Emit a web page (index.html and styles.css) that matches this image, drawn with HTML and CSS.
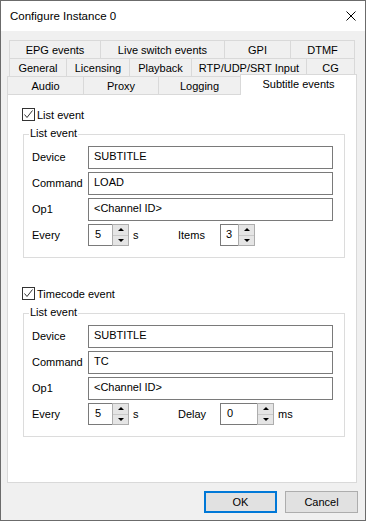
FILE: index.html
```html
<!DOCTYPE html>
<html>
<head>
<meta charset="utf-8">
<link rel="stylesheet" href="styles.css">
</head>
<body>
<div class="window">
  <div class="titlebar">
    <span class="title">Configure Instance 0</span>
    <svg class="close" width="10" height="10" viewBox="0 0 10 10"><path d="M0.5 0.5L9.5 9.5M9.5 0.5L0.5 9.5" stroke="#000" stroke-width="1" fill="none"/></svg>
  </div>
  <div class="tabs">
    <div class="tabrow">
      <div class="tab t-epg">EPG events</div>
      <div class="tab t-live">Live switch events</div>
      <div class="tab t-gpi">GPI</div>
      <div class="tab t-dtmf">DTMF</div>
    </div>
    <div class="tabrow">
      <div class="tab t-gen">General</div>
      <div class="tab t-lic">Licensing</div>
      <div class="tab t-play">Playback</div>
      <div class="tab t-rtp">RTP/UDP/SRT Input</div>
      <div class="tab t-cg">CG</div>
    </div>
    <div class="tabrow front">
      <div class="tab t-audio">Audio</div>
      <div class="tab t-proxy">Proxy</div>
      <div class="tab t-log">Logging</div>
      <div class="tab t-sub selected">Subtitle events</div>
    </div>
  </div>
  <div class="panel">
    <section class="event">
      <div class="check"><span class="box"><svg width="11" height="11" viewBox="0 0 11 11"><path d="M1.5 5.5L4 8.5L9.5 1.5" stroke="#333" stroke-width="1" fill="none"/></svg></span><span class="ctext">List event</span></div>
      <div class="group">
        <span class="legend">List event</span>
        <div class="field"><span class="lbl">Device</span><div class="input">SUBTITLE</div></div>
        <div class="field"><span class="lbl">Command</span><div class="input">LOAD</div></div>
        <div class="field"><span class="lbl">Op1</span><div class="input">&lt;Channel ID&gt;</div></div>
        <div class="spinrow">
          <span class="lbl">Every</span>
          <div class="spin"><span class="val v-every">5</span><span class="btns"><span class="up"></span><span class="down"></span></span></div>
          <span class="unit">s</span>
          <span class="lbl2">Items</span>
          <div class="spin"><span class="val v-items">3</span><span class="btns"><span class="up"></span><span class="down"></span></span></div>
        </div>
      </div>
    </section>
    <section class="event second">
      <div class="check"><span class="box"><svg width="11" height="11" viewBox="0 0 11 11"><path d="M1.5 5.5L4 8.5L9.5 1.5" stroke="#333" stroke-width="1" fill="none"/></svg></span><span class="ctext">Timecode event</span></div>
      <div class="group">
        <span class="legend">List event</span>
        <div class="field"><span class="lbl">Device</span><div class="input">SUBTITLE</div></div>
        <div class="field"><span class="lbl">Command</span><div class="input">TC</div></div>
        <div class="field"><span class="lbl">Op1</span><div class="input">&lt;Channel ID&gt;</div></div>
        <div class="spinrow">
          <span class="lbl">Every</span>
          <div class="spin"><span class="val v-every">5</span><span class="btns"><span class="up"></span><span class="down"></span></span></div>
          <span class="unit">s</span>
          <span class="lbl2">Delay</span>
          <div class="spin"><span class="val v-delay">0</span><span class="btns"><span class="up"></span><span class="down"></span></span></div>
          <span class="unit2">ms</span>
        </div>
      </div>
    </section>
  </div>
  <div class="footer">
    <button class="btn ok">OK</button>
    <button class="btn">Cancel</button>
  </div>
</div>
</body>
</html>
```
FILE: styles.css
```css
* { box-sizing: border-box; }
html, body { margin: 0; padding: 0; }
body {
  font-family: "Liberation Sans", Arial, sans-serif;
  font-size: 11px;
  color: #000;
  background: #fff;
}
.window {
  width: 366px;
  height: 521px;
  border: 1px solid #6b6b6b;
  background: #f0f0f0;
  display: flex;
  flex-direction: column;
}
.titlebar {
  height: 30px;
  flex: none;
  background: #fff;
  display: flex;
  align-items: center;
  justify-content: space-between;
  padding: 0 9px 0 9px;
}
.title { line-height: 17px; font-size: 11.5px; }
.close { display: block; }

.tabs { margin-top: 9px; display: flex; flex-direction: column; }
.tabrow { display: flex; height: 18px; margin-left: 8px; }
.tabrow.front { margin-left: 6px; }
.tab {
  height: 18px;
  border-top: 1px solid #d9d9d9;
  border-left: 1px solid #d9d9d9;
  text-align: center;
  padding-top: 1px;
  line-height: 16px;
  white-space: nowrap;
  background: #f0f0f0;
}
.tab:last-child { border-right: 1px solid #d9d9d9; }
.t-epg { width: 91px; }
.t-live { width: 124px; }
.t-gpi { width: 66px; }
.t-dtmf { width: 65px; }
.t-gen { width: 57px; }
.t-lic { width: 63px; }
.t-play { width: 62px; }
.t-rtp { width: 115px; }
.t-cg { width: 49px; }
.t-audio { width: 76px; }
.t-proxy { width: 75px; }
.t-log { width: 82px; }
.t-sub { width: 117px; }
.tab.selected {
  background: #fff;
  margin-top: -2px;
  height: 21px;
  position: relative;
  z-index: 1;
}

.panel {
  margin-left: 6px;
  width: 350px;
  height: 389px;
  flex: none;
  border: 1px solid #d9d9d9;
  background: #fff;
  padding: 13px 0 0 14px;
}
.event.second { margin-top: 29px; }
.check {
  display: flex;
  align-items: center;
  height: 13px;
}
.ctext { line-height: 13px; margin-top: 2px; }
.box {
  width: 13px;
  height: 13px;
  border: 1px solid #333;
  margin-right: 2px;
  background: #fff;
}
.box svg { display: block; }
.group {
  margin: 13px 0 0 1px;
  width: 322px;
  border: 1px solid #dcdcdc;
  padding: 0 11px 11px 8px;
  display: flex;
  flex-direction: column;
}
.legend {
  align-self: flex-start;
  margin: -9px 0 6px -3px;
  padding: 0 1px;
  background: #fff;
  line-height: 14px;
}
.field {
  display: flex;
  align-items: center;
  height: 23px;
  margin-bottom: 3px;
}
.spinrow {
  display: flex;
  align-items: center;
  height: 22px;
}
.lbl { width: 56px; line-height: 17px; }
.input {
  width: 245px;
  height: 23px;
  border: 1px solid #7a7a7a;
  padding: 1px 5px 0;
  line-height: 16px;
  white-space: nowrap;
}
.spin { display: flex; height: 22px; }
.val {
  border: 1px solid #7a7a7a;
  border-right: none;
  padding-left: 6px;
  line-height: 19px;
  background: #fff;
}
.v-every { width: 24px; }
.v-items { width: 18px; padding-left: 5px; }
.v-delay { width: 37px; }
.btns {
  width: 17px;
  border: 1px solid #adadad;
  background: #e5e5e5;
  display: flex;
  flex-direction: column;
}
.up, .down {
  flex: 1;
  display: flex;
  align-items: center;
  justify-content: center;
}
.up { border-bottom: 1px solid #c9c9c9; }
.up::after {
  content: "";
  border-left: 3px solid transparent;
  border-right: 3px solid transparent;
  border-bottom: 3px solid #000;
}
.down::after {
  content: "";
  border-left: 3px solid transparent;
  border-right: 3px solid transparent;
  border-top: 3px solid #000;
}
.unit { width: 45px; margin-left: 4px; }
.lbl2 { width: 42px; }
.unit2 { margin-left: 4px; }

.footer {
  display: flex;
  justify-content: flex-end;
  gap: 8px;
  padding: 8px 7px 0 0;
}
.btn {
  width: 73px;
  height: 22px;
  border: 1px solid #adadad;
  background: #e1e1e1;
  font: inherit;
  color: #000;
  padding: 0;
}
.btn.ok { border: 2px solid #0078d7; }
```
